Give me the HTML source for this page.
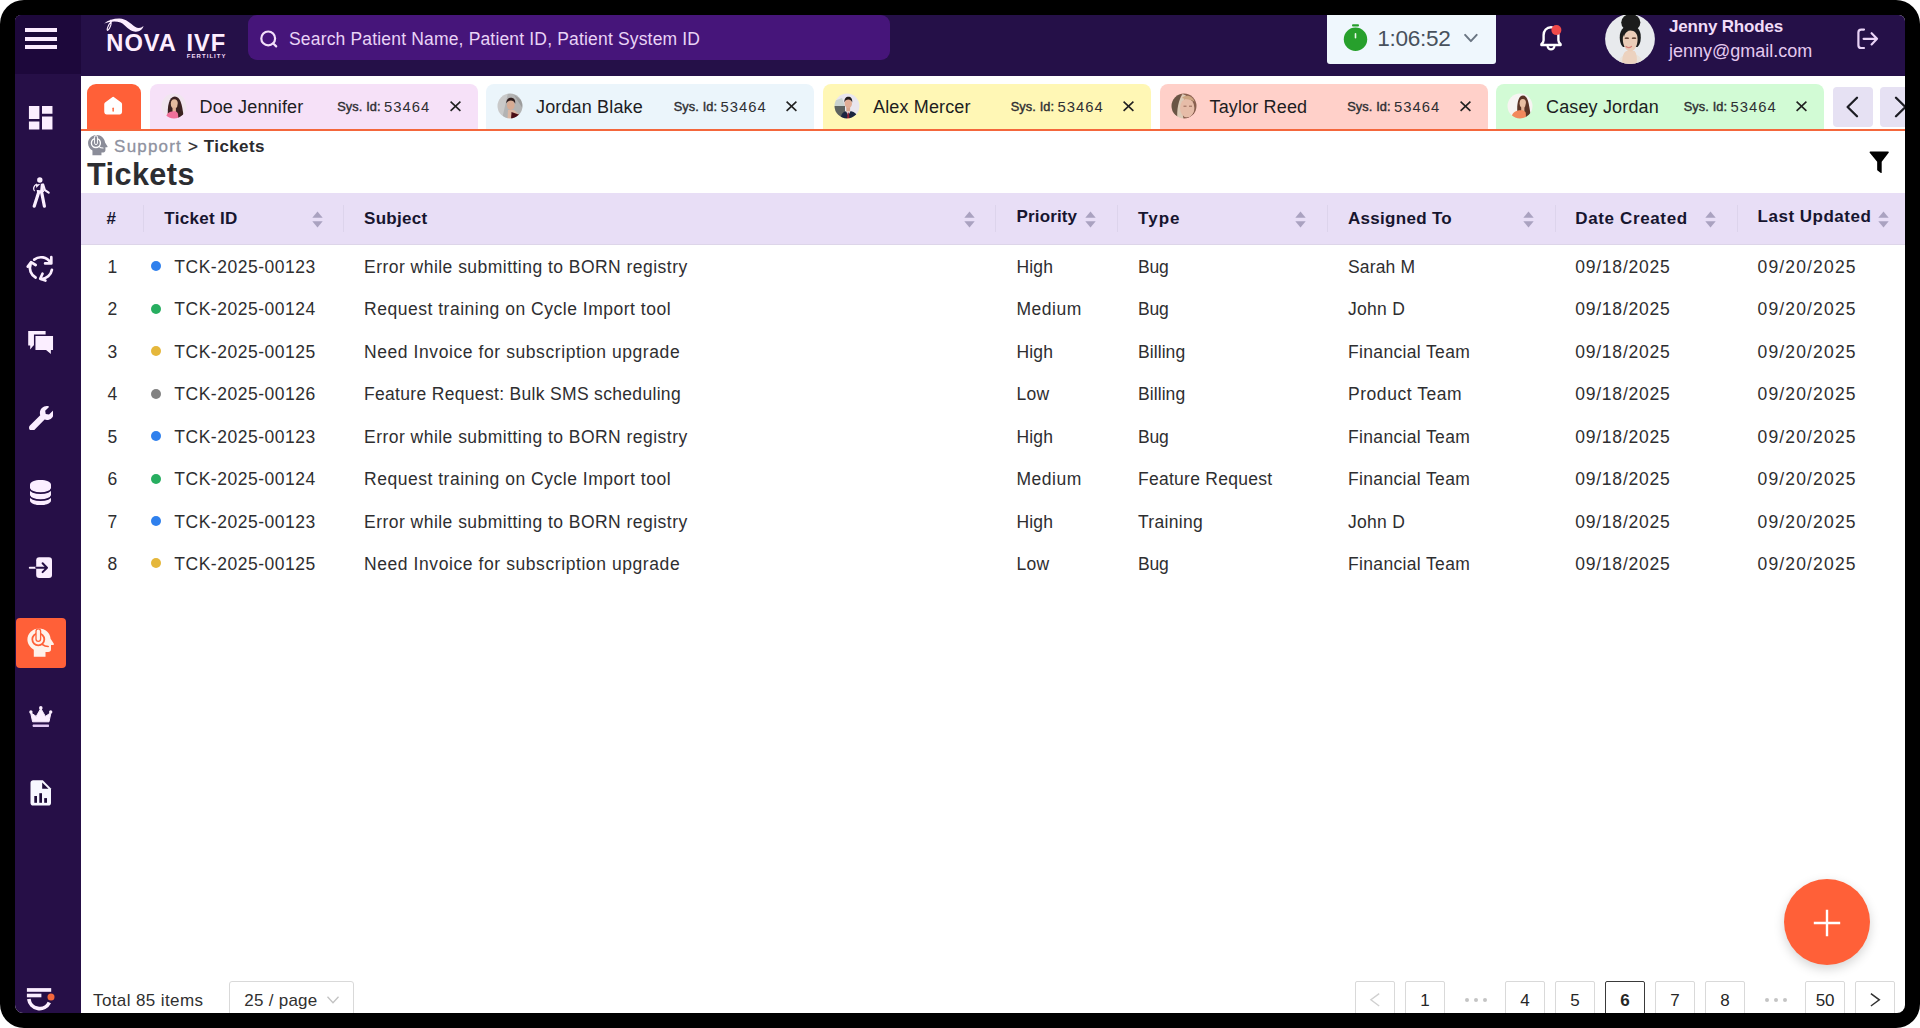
<!DOCTYPE html>
<html lang="en">
<head>
<meta charset="utf-8">
<title>Tickets</title>
<style>
*{box-sizing:border-box;margin:0;padding:0}
html,body{width:1920px;height:1028px;overflow:hidden;background:#fff}
body{font-family:"Liberation Sans",sans-serif;color:#2d2d2d;position:relative}
.frame{position:absolute;left:0;top:0;width:1920px;height:1028px;background:#000;border-radius:24px}
.screen{position:absolute;left:15px;top:15px;width:1890px;height:998px;background:#fff;border-radius:6px 6px 8px 8px;overflow:hidden}
.page{position:absolute;left:-15px;top:-15px;width:1920px;height:1028px}
.page div,.page span,.page svg,.page h1,.page i,.page b.p{position:absolute;white-space:nowrap}
.topbar{left:15px;top:15px;width:1890px;height:61px;background:#251048}
.burger{left:15px;top:15px;width:66px;height:59px;background:#1d083b}
.burger i{left:10px;width:32px;height:4px;background:#fbeaff}
.sidebar{left:15px;top:74px;width:66px;height:940px;background:#260f47}
.active{left:16px;top:618px;width:50px;height:50px;background:#ff6038;border-radius:4px}
.search{left:248px;top:15px;width:642px;height:45.4px;background:#46157a;border-radius:9px}
.stext{left:289px;top:27.6px;font-size:17.5px;line-height:22px;color:#e9d3f6;letter-spacing:.17px}
.timer{left:1327px;top:15px;width:169px;height:49px;background:#eff7fd;border-radius:0 0 3px 3px}
.ttext{left:1377.2px;top:25.9px;font-size:22.6px;line-height:26px;color:#48515c;letter-spacing:-.3px}
.uname{left:1669px;top:15.9px;font-size:17px;line-height:22px;font-weight:bold;color:#f1dcf8;letter-spacing:-.18px}
.umail{left:1669px;top:39.7px;font-size:18px;line-height:22px;color:#e4c9ef}
.logo1{left:106.3px;top:30.45px;font-size:23.7px;line-height:26px;font-weight:bold;color:#fdeeff;letter-spacing:1px}
.logo2{left:186.5px;top:30.45px;font-size:23.7px;line-height:26px;font-weight:bold;color:#fdeeff;letter-spacing:.9px}
.logo3{left:186.8px;top:52.4px;font-size:6px;line-height:8px;font-weight:bold;color:#f3dcf7;letter-spacing:1.05px}
/* tabs */
.tabline{left:81px;top:128.7px;width:1824px;height:2.6px;background:#f4673c}
.tab{top:84px;height:45px;width:328px;border-radius:8px 8px 0 0}
.tab .nm{left:50px;top:11.6px;font-size:18px;line-height:22px;color:#1d1d1f;letter-spacing:.15px}
.tab .sid{left:187.7px;top:14px;font-size:12.8px;line-height:18px;font-weight:normal;-webkit-text-stroke:.4px #2f2f33;color:#2f2f33;letter-spacing:.1px}
.tab .num{left:234.6px;top:12.8px;font-size:14.8px;line-height:20px;color:#2f2f33;letter-spacing:1px}
.tab svg.x{left:300.4px;top:17.3px}
.tab svg.av{left:11.3px;top:9.3px}
.home{left:86.5px;top:84px;width:54.5px;height:46px;background:#ff6038;border-radius:9px 9px 0 0}
.arr{top:86.5px;width:40px;height:40px;background:#e6e1f3;border-radius:4px}
/* heading */
.crumb{left:114.1px;top:136.6px;font-size:17px;line-height:20px;color:#8f92a0;letter-spacing:1.2px;-webkit-text-stroke:.3px #8f92a0}
.crumb b{color:#2b2b2e;letter-spacing:.38px;-webkit-text-stroke:0}
.crumb i{position:static!important;font-style:normal;color:#2b2b2e;letter-spacing:0;-webkit-text-stroke:.3px #2b2b2e}
h1{left:87px;top:157.3px;font-size:30.6px;line-height:34px;font-weight:bold;color:#2c2d31;letter-spacing:.42px}
/* table */
.thead{left:81px;top:192.5px;width:1824px;height:52.5px;background:#e8def6;border-bottom:1px solid #ddd5e9}
.th{top:208.6px;font-size:17px;line-height:20px;font-weight:bold;color:#17152f}
.sep{top:205px;width:1px;height:27px;background:#ddd4ec}
.row{left:0;width:1920px;height:42px;font-size:17.5px;line-height:20px;color:#2e2e30}
.row span{top:11.8px}
.row i{left:151.2px;top:16.2px;width:10px;height:10px;border-radius:50%}
.c0{left:107.5px}.c1{left:174.3px;letter-spacing:.76px}.c2{left:364px}.c3{left:1016.5px}.c4{left:1138px}.c5{left:1348px}.c6{left:1575.2px;letter-spacing:.95px}.c7{left:1757.5px;letter-spacing:1.25px}
/* footer */
.total{left:93px;top:991px;font-size:17px;line-height:20px;color:#303030;letter-spacing:.39px}
.psel{left:229.3px;top:980.8px;width:125px;height:40px;border:1px solid #d9d9d9;border-radius:3px;background:#fff}
.psel span{left:14px;top:9.5px;font-size:17px;line-height:20px;color:#303030;letter-spacing:.26px}
.pg{top:980.8px;width:39.6px;height:40px;border:1px solid #d9d9d9;border-radius:2px;background:#fff;font-size:17px;color:#262626;text-align:center;line-height:38px}
.pg.on{border-color:#3a3a3a;font-weight:bold}
.dot{top:998.4px;width:4px;height:4px;border-radius:50%;background:#c4c4c4}
.fab{left:1784px;top:879px;width:86px;height:86px;border-radius:50%;background:#ff6038;box-shadow:0 4px 11px rgba(0,0,0,.17)}

</style>
</head>
<body>
<div class="frame"></div>
<div class="screen"><div class="page">
<div class="topbar"></div>
<div class="sidebar"></div>
<div class="burger"><i style="top:13px"></i><i style="top:21.5px"></i><i style="top:30px"></i></div>

<!-- logo -->
<svg style="left:102px;top:16px" width="46" height="20" viewBox="0 0 46 20"><path d="M2.200 7.400C6 4 12 2.300 17.500 2.400 24.200 2.600 28.200 7.300 33 10.700c3 2 6 1.600 8.500-.700-.800 3.500-3.900 5.900-8 5.700C26.800 15.400 24 9 18.500 6.500 14 4.700 8 5.200 2.200 7.400z" fill="#fdeeff"/><path d="M8.600 4.300C10.400 7 7.600 13.500 5.700 14.400 4.400 14.600 5.600 9.200 9.600 5.200" fill="none" stroke="#fdeeff" stroke-width="1.100" stroke-linecap="round"/></svg>
<span class="logo1">NOVA</span><span class="logo2">IVF</span><span class="logo3">FERTILITY</span>

<!-- search -->
<div class="search"></div>
<svg style="left:258px;top:27px" width="24" height="24" viewBox="0 0 24 24" fill="none" stroke="#f3dffa" stroke-width="2.200" stroke-linecap="round"><circle cx="10.200" cy="11.400" r="6.900"/><path d="M15.300 16.500l2.900 2.900"/></svg>
<span class="stext">Search Patient Name, Patient ID, Patient System ID</span>

<!-- timer -->
<div class="timer"></div>
<svg style="left:1342px;top:22px" width="28" height="30" viewBox="0 0 28 30"><rect x="10" y="2.2" width="7" height="2.2" rx="1" fill="#27a02c"/><circle cx="13.5" cy="17.2" r="11.7" fill="#27a02c"/><rect x="12.7" y="11" width="1.6" height="5.6" rx=".8" fill="#e9f7ea"/></svg>
<span class="ttext">1:06:52</span>
<svg style="left:1462px;top:32px" width="18" height="12" viewBox="0 0 18 12" fill="none" stroke="#6b7683" stroke-width="2" stroke-linecap="round" stroke-linejoin="round"><path d="M3.100 2.900l5.800 6.200 5.800-6.200"/></svg>

<!-- bell -->
<svg style="left:1536px;top:22px" width="30" height="32" viewBox="0 0 30 32"><path d="M15 5.2c-4.4 0-7.4 3.4-7.4 7.8v5.2c0 1.6-.8 2.8-2.2 4v.8h19.2v-.8c-1.400-1.200-2.200-2.400-2.200-4V13c0-4.400-3-7.800-7.400-7.800z" fill="none" stroke="#fff" stroke-width="2.4" stroke-linejoin="round"/><path d="M11.6 24.6c.4 1.700 1.700 2.800 3.400 2.800s3-1.100 3.400-2.800" fill="none" stroke="#fff" stroke-width="2.2" stroke-linecap="round"/><circle cx="20.400" cy="8.100" r="5" fill="#f04a4a"/></svg>

<!-- user -->
<svg style="left:1605.200px;top:13.600px" width="50" height="50" viewBox="0 0 50 50"><defs><clipPath id="uc"><circle cx="25" cy="25" r="24.900"/></clipPath></defs><g clip-path="url(#uc)"><rect width="50" height="50" fill="#e8eaed"/><g filter="url(#bl)"><path d="M13 50c1-5 3-8 6-9h13c3 1 5 4 6 9z" fill="#e9e3dc"/><path d="M17.500 50c-1-6 1-12 4-13h8c2 2 3 7 2 13z" fill="#ecd2bf"/><ellipse cx="25.800" cy="8.500" rx="9.600" ry="8.500" fill="#1c1f1d"/><path d="M15 27C13.500 17 18 11.500 25.500 11.500S37 17 35.500 27c-.500 3-2 5-3 6H18c-1.500-1.500-2.500-3.500-3-6z" fill="#1c1f1d"/><path d="M17.800 25c0-5.500 3-8.500 7.500-8.500s7.300 3 7.300 8.500c0 6.500-3 12.500-7.300 12.500S17.800 31.500 17.800 25z" fill="#ebcdb8"/><ellipse cx="21.800" cy="24.200" rx="2.300" ry=".900" fill="#6b4a3a"/><ellipse cx="29" cy="24.200" rx="2.300" ry=".900" fill="#6b4a3a"/><path d="M21 32.500c1.500 1.200 4 1.200 5.500 0" fill="none" stroke="#d9837a" stroke-width="1.300" stroke-linecap="round"/><path d="M19 23c.500-3 2.500-6 6.500-6.500-3 .500-5 0-7-1.500-1 2.500-1 5 .500 8z" fill="#1c1f1d"/></g></g></svg>
<span class="uname">Jenny Rhodes</span>
<span class="umail">jenny@gmail.com</span>
<svg style="left:1855px;top:26px" width="26" height="26" viewBox="0 0 26 26" fill="none" stroke="#e9d3f6" stroke-width="2.200" stroke-linecap="round" stroke-linejoin="round"><path d="M9 3.600H6.200c-1.700 0-2.800 1.100-2.800 2.800v12.800c0 1.700 1.100 2.800 2.800 2.800H9"/><path d="M8.600 12.800h13.200M16.600 7.200l5.400 5.600-5.400 5.600"/></svg>
<!-- tabs -->
<svg style="left:0;top:0" width="0" height="0"><defs><filter id="bl" x="-10%" y="-10%" width="120%" height="120%"><feGaussianBlur stdDeviation=".550"/></filter></defs></svg>
<div class="home"><svg style="left:14.800px;top:10.300px" width="24.300" height="25.800" viewBox="0 0 24 24" preserveAspectRatio="none"><path d="M11.400 2.700a1 1 0 0 1 1.200 0l7.400 5.200c.500.400.800.900.800 1.600v7.100c0 1.500-1 2.500-2.500 2.500H5.700c-1.500 0-2.500-1-2.500-2.500V9.500c0-.700.300-1.200.800-1.600z" fill="#fff"/><rect x="11.300" y="12.600" width="1.400" height="3.900" rx=".7" fill="#ff6038"/></svg></div>
<div class="tab" style="left:149.5px;background:#f6e1f8"><svg class="av" width="26" height="26" viewBox="0 0 26 26"><defs><clipPath id="ca1"><circle cx="13" cy="13" r="12.500"/></clipPath></defs><g clip-path="url(#ca1)"><g filter="url(#bl)"><rect width="26" height="26" fill="#f1e6ef"/><path d="M7 24C6 14 8 3.500 13.800 3.500S21 12 22.500 22.500L18 26H8z" fill="#3b2320"/><ellipse cx="13.300" cy="10.800" rx="3.500" ry="4.500" fill="#e6bb9e"/><path d="M11.500 14h3.400v5h-3.400z" fill="#e2b296"/><path d="M4.500 26c.500-5 3-7.800 8.500-7.800 3 0 4.500 1.300 5 7.800z" fill="#f0709a"/><path d="M16.400 10c1.200 5 1.800 10 5.600 13.500L17.500 26z" fill="#3b2320"/></g></g></svg><span class="nm">Doe Jennifer</span><span class="sid">Sys. Id:</span><span class="num">53464</span><svg class="x" width="11" height="11" viewBox="0 0 11 11" fill="none" stroke="#222" stroke-width="1.600"><path d="M.600.600L10.400 9.900M10.400.600L.600 9.900"/></svg></div>
<div class="tab" style="left:486px;background:#ebf5fb"><svg class="av" width="26" height="26" viewBox="0 0 26 26"><defs><clipPath id="ca2"><circle cx="13" cy="13" r="12.500"/></clipPath></defs><g clip-path="url(#ca2)"><g filter="url(#bl)"><rect width="26" height="26" fill="#b3b3b3"/><path d="M0 0h11L5 26H0z" fill="#c9c9c9"/><path d="M17 2l9 6v8z" fill="#9c9c9c"/><path d="M10.500 26l.500-9h6l6 5.500-3 3.500z" fill="#dcb7a3"/><path d="M14.500 19l8.500 3-3 4h-6z" fill="#4a1019"/><ellipse cx="13.800" cy="12" rx="3.900" ry="5" fill="#d6ab94"/><path d="M9.300 10.500c0-3.800 2-5.700 4.700-5.700s4.700 2 4.200 6c-1-2.300-2.400-3.300-4.300-3.300s-3.500.700-4.600 3z" fill="#2d1a1a"/></g></g></svg><span class="nm">Jordan Blake</span><span class="sid">Sys. Id:</span><span class="num">53464</span><svg class="x" width="11" height="11" viewBox="0 0 11 11" fill="none" stroke="#222" stroke-width="1.600"><path d="M.600.600L10.400 9.900M10.400.600L.600 9.900"/></svg></div>
<div class="tab" style="left:823px;background:#fff7b5"><svg class="av" width="26" height="26" viewBox="0 0 26 26"><defs><clipPath id="ca3"><circle cx="13" cy="13" r="12.500"/></clipPath></defs><g clip-path="url(#ca3)"><g filter="url(#bl)"><rect width="26" height="26" fill="#e9e6ee"/><path d="M0 13h11v13H0z" fill="#5d625e"/><path d="M0 8l8-3 3 8H0z" fill="#c9d2cf"/><path d="M6.500 26c.500-5.500 3-8 8-8s9 2.500 9.500 8z" fill="#1b2740"/><path d="M12 18l2.200 4.500 2.400-4.500z" fill="#f1f1f4"/><path d="M13.600 19.500h1.200l.700 6.500h-2.600z" fill="#8e2436"/><rect x="12.300" y="14" width="3.800" height="4.500" fill="#d8a58c"/><ellipse cx="14.300" cy="10.500" rx="3.700" ry="4.700" fill="#e2ae96"/><path d="M10.400 9.500c-.300-4 1.600-5.800 4-5.800s4.300 2 3.800 5.800c-.800-2.300-2-3-3.900-3s-3.100.700-3.900 3z" fill="#231b1b"/></g></g></svg><span class="nm">Alex Mercer</span><span class="sid">Sys. Id:</span><span class="num">53464</span><svg class="x" width="11" height="11" viewBox="0 0 11 11" fill="none" stroke="#222" stroke-width="1.600"><path d="M.600.600L10.400 9.900M10.400.600L.600 9.900"/></svg></div>
<div class="tab" style="left:1159.5px;background:#ffd0c9"><svg class="av" width="26" height="26" viewBox="0 0 26 26"><defs><clipPath id="ca4"><circle cx="13" cy="13" r="12.500"/></clipPath></defs><g clip-path="url(#ca4)"><g filter="url(#bl)"><rect width="26" height="26" fill="#8a6150"/><path d="M0 0h10L6 26H0z" fill="#6a5444"/><path d="M11.500 1C7.500 7 5.500 17 6.500 26h6C11 18 11.500 9 15 2.500z" fill="#dccbb8"/><ellipse cx="16.200" cy="15" rx="7.200" ry="9.600" fill="#e6bca8"/><path d="M11 5c3-3.500 10-3 12.500 3.500-3.500-2-8-2-12.500-3.500z" fill="#cda582"/><path d="M13 24.500c3.500 1.500 8-1 10-5l2 3-5 3.500z" fill="#5b2c26"/><path d="M12.500 13.200h3M18 13.200h3" stroke="#8b5e4e" stroke-width=".900"/></g></g></svg><span class="nm">Taylor Reed</span><span class="sid">Sys. Id:</span><span class="num">53464</span><svg class="x" width="11" height="11" viewBox="0 0 11 11" fill="none" stroke="#222" stroke-width="1.600"><path d="M.600.600L10.400 9.900M10.400.600L.600 9.900"/></svg></div>
<div class="tab" style="left:1496px;background:#d2fbd5"><svg class="av" width="26" height="26" viewBox="0 0 26 26"><defs><clipPath id="ca5"><circle cx="13" cy="13" r="12.500"/></clipPath></defs><g clip-path="url(#ca5)"><g filter="url(#bl)"><rect width="26" height="26" fill="#f7f4f2"/><path d="M10.500 22C9.500 12 11 2.500 16 2.500S22 11 23.500 21L20 25h-8z" fill="#5b3526"/><ellipse cx="15.800" cy="10.300" rx="3.200" ry="4.400" fill="#e8bfa2"/><path d="M14.200 13.500h3.200v4.500h-3.200z" fill="#e3b497"/><path d="M4.500 24c.800-4.500 4-6.800 9.500-6.800 4 0 6 2 6.500 8.800H6z" fill="#f2895b"/><path d="M18.400 9.500c1 4.500 1.500 9 4.500 12.500L19 25z" fill="#5b3526"/></g></g></svg><span class="nm">Casey Jordan</span><span class="sid">Sys. Id:</span><span class="num">53464</span><svg class="x" width="11" height="11" viewBox="0 0 11 11" fill="none" stroke="#222" stroke-width="1.600"><path d="M.600.600L10.400 9.900M10.400.600L.600 9.900"/></svg></div>
<div class="arr" style="left:1833px"><svg style="left:12px;top:9px" width="16" height="22" viewBox="0 0 16 22" fill="none" stroke="#1d1d24" stroke-width="2.300" stroke-linecap="round" stroke-linejoin="round"><path d="M12 1.800L2.600 11 12 20.200"/></svg></div>
<div class="arr" style="left:1880px"><svg style="left:12px;top:9px" width="16" height="22" viewBox="0 0 16 22" fill="none" stroke="#1d1d24" stroke-width="2.300" stroke-linecap="round" stroke-linejoin="round"><path d="M4 1.800L13.400 11 4 20.200"/></svg></div>
<div class="tabline"></div>
<!-- heading -->
<svg style="left:86.700px;top:133.700px" width="22" height="22.200" viewBox="0 0 21 21"><path d="M9 .800c4.600 0 8 3.300 8.200 7.300l2.300 3.400c.300.500 0 1-.500 1h-1.400v3c0 1.200-.800 2-2 2h-1.800v2.700H5.200v-4.500C2.700 14.200 1 11.700 1 8.700 1 4.300 4.500.800 9 .800z" fill="#8b8d99"/><circle cx="8.500" cy="8.500" r="4.300" fill="none" stroke="#fff" stroke-width="1.300"/><rect x="7.200" y="1.500" width="2.800" height="8.500" rx="1.400" fill="#8b8d99" stroke="#fff" stroke-width=".900"/><path d="M11.500 12c1 .900 2.300 1.300 3.800 1.300" fill="none" stroke="#fff" stroke-width="1.100" stroke-linecap="round"/></svg>
<span class="crumb">Support <i>&gt;</i> <b>Tickets</b></span>
<h1>Tickets</h1>
<svg style="left:1868.700px;top:151.200px" width="20.400" height="23.200" viewBox="0 0 22 24" preserveAspectRatio="none"><path d="M1.400.600h19.200c.700 0 1 .700.600 1.200L13.700 11v11.200c0 .500-.500.800-.900.500l-3.600-2.500c-.300-.200-.400-.400-.400-.700V11L.800 1.800C.400 1.300.700.600 1.400.600z" fill="#000"/></svg>
<!-- table head -->
<div class="thead"></div>
<span class="th" style="left:106.5px;top:208.6px;letter-spacing:0px">#</span>
<span class="th" style="left:164.3px;top:208.6px;letter-spacing:0.3px">Ticket ID</span>
<span class="th" style="left:364px;top:208.6px;letter-spacing:0.3px">Subject</span>
<span class="th" style="left:1016.5px;top:207.4px;letter-spacing:0.15px">Priority</span>
<span class="th" style="left:1138px;top:208.6px;letter-spacing:1.05px">Type</span>
<span class="th" style="left:1348px;top:208.6px;letter-spacing:0.3px">Assigned To</span>
<span class="th" style="left:1575.3px;top:208.6px;letter-spacing:0.63px">Date Created</span>
<span class="th" style="left:1757.6px;top:207.4px;letter-spacing:0.5px">Last Updated</span>
<div class="sep" style="left:142.5px"></div>
<div class="sep" style="left:342.5px"></div>
<div class="sep" style="left:995px"></div>
<div class="sep" style="left:1116.5px"></div>
<div class="sep" style="left:1326.5px"></div>
<div class="sep" style="left:1554.5px"></div>
<div class="sep" style="left:1736.5px"></div>
<svg style="left:311.5px;top:211px" width="11" height="17" viewBox="0 0 11 17"><path d="M5.500.400L10.700 6.800H.300z" fill="#aaa2c0"/><path d="M5.500 16.600L.300 10.200h10.400z" fill="#aaa2c0"/></svg>
<svg style="left:964px;top:211px" width="11" height="17" viewBox="0 0 11 17"><path d="M5.500.400L10.700 6.800H.300z" fill="#aaa2c0"/><path d="M5.500 16.600L.300 10.200h10.400z" fill="#aaa2c0"/></svg>
<svg style="left:1084.8px;top:211px" width="11" height="17" viewBox="0 0 11 17"><path d="M5.500.400L10.700 6.800H.300z" fill="#aaa2c0"/><path d="M5.500 16.600L.300 10.200h10.400z" fill="#aaa2c0"/></svg>
<svg style="left:1295px;top:211px" width="11" height="17" viewBox="0 0 11 17"><path d="M5.500.400L10.700 6.800H.300z" fill="#aaa2c0"/><path d="M5.500 16.600L.300 10.200h10.400z" fill="#aaa2c0"/></svg>
<svg style="left:1522.8px;top:211px" width="11" height="17" viewBox="0 0 11 17"><path d="M5.500.400L10.700 6.800H.300z" fill="#aaa2c0"/><path d="M5.500 16.600L.300 10.200h10.400z" fill="#aaa2c0"/></svg>
<svg style="left:1705px;top:211px" width="11" height="17" viewBox="0 0 11 17"><path d="M5.500.400L10.700 6.800H.300z" fill="#aaa2c0"/><path d="M5.500 16.600L.300 10.200h10.400z" fill="#aaa2c0"/></svg>
<svg style="left:1877.5px;top:211px" width="11" height="17" viewBox="0 0 11 17"><path d="M5.500.400L10.700 6.800H.300z" fill="#aaa2c0"/><path d="M5.500 16.600L.300 10.200h10.400z" fill="#aaa2c0"/></svg><div class="row" style="top:245.0px"><span class="c0">1</span><i style="background:#2f80ed"></i><span class="c1" style="letter-spacing:0.52px">TCK-2025-00123</span><span class="c2" style="letter-spacing:0.47px">Error while submitting to BORN registry</span><span class="c3" style="letter-spacing:0.17px">High</span><span class="c4" style="letter-spacing:-0.17px">Bug</span><span class="c5" style="letter-spacing:0.14px">Sarah M</span><span class="c6" style="letter-spacing:0.78px">09/18/2025</span><span class="c7" style="letter-spacing:1.16px">09/20/2025</span></div>
<div class="row" style="top:287.47px"><span class="c0">2</span><i style="background:#27ae60"></i><span class="c1" style="letter-spacing:0.52px">TCK-2025-00124</span><span class="c2" style="letter-spacing:0.52px">Request training on Cycle Import tool</span><span class="c3" style="letter-spacing:0.51px">Medium</span><span class="c4" style="letter-spacing:-0.17px">Bug</span><span class="c5" style="letter-spacing:0.27px">John D</span><span class="c6" style="letter-spacing:0.78px">09/18/2025</span><span class="c7" style="letter-spacing:1.16px">09/20/2025</span></div>
<div class="row" style="top:329.94px"><span class="c0">3</span><i style="background:#e5b73b"></i><span class="c1" style="letter-spacing:0.52px">TCK-2025-00125</span><span class="c2" style="letter-spacing:0.58px">Need Invoice for subscription upgrade</span><span class="c3" style="letter-spacing:0.17px">High</span><span class="c4" style="letter-spacing:0.08px">Billing</span><span class="c5" style="letter-spacing:0.34px">Financial Team</span><span class="c6" style="letter-spacing:0.78px">09/18/2025</span><span class="c7" style="letter-spacing:1.16px">09/20/2025</span></div>
<div class="row" style="top:372.41px"><span class="c0">4</span><i style="background:#828282"></i><span class="c1" style="letter-spacing:0.52px">TCK-2025-00126</span><span class="c2" style="letter-spacing:0.32px">Feature Request: Bulk SMS scheduling</span><span class="c3" style="letter-spacing:0.25px">Low</span><span class="c4" style="letter-spacing:0.08px">Billing</span><span class="c5" style="letter-spacing:0.54px">Product Team</span><span class="c6" style="letter-spacing:0.78px">09/18/2025</span><span class="c7" style="letter-spacing:1.16px">09/20/2025</span></div>
<div class="row" style="top:414.88px"><span class="c0">5</span><i style="background:#2f80ed"></i><span class="c1" style="letter-spacing:0.52px">TCK-2025-00123</span><span class="c2" style="letter-spacing:0.47px">Error while submitting to BORN registry</span><span class="c3" style="letter-spacing:0.17px">High</span><span class="c4" style="letter-spacing:-0.17px">Bug</span><span class="c5" style="letter-spacing:0.34px">Financial Team</span><span class="c6" style="letter-spacing:0.78px">09/18/2025</span><span class="c7" style="letter-spacing:1.16px">09/20/2025</span></div>
<div class="row" style="top:457.35px"><span class="c0">6</span><i style="background:#27ae60"></i><span class="c1" style="letter-spacing:0.52px">TCK-2025-00124</span><span class="c2" style="letter-spacing:0.52px">Request training on Cycle Import tool</span><span class="c3" style="letter-spacing:0.51px">Medium</span><span class="c4" style="letter-spacing:0.27px">Feature Request</span><span class="c5" style="letter-spacing:0.34px">Financial Team</span><span class="c6" style="letter-spacing:0.78px">09/18/2025</span><span class="c7" style="letter-spacing:1.16px">09/20/2025</span></div>
<div class="row" style="top:499.82px"><span class="c0">7</span><i style="background:#2f80ed"></i><span class="c1" style="letter-spacing:0.52px">TCK-2025-00123</span><span class="c2" style="letter-spacing:0.47px">Error while submitting to BORN registry</span><span class="c3" style="letter-spacing:0.17px">High</span><span class="c4" style="letter-spacing:0.32px">Training</span><span class="c5" style="letter-spacing:0.27px">John D</span><span class="c6" style="letter-spacing:0.78px">09/18/2025</span><span class="c7" style="letter-spacing:1.16px">09/20/2025</span></div>
<div class="row" style="top:542.29px"><span class="c0">8</span><i style="background:#e5b73b"></i><span class="c1" style="letter-spacing:0.52px">TCK-2025-00125</span><span class="c2" style="letter-spacing:0.58px">Need Invoice for subscription upgrade</span><span class="c3" style="letter-spacing:0.25px">Low</span><span class="c4" style="letter-spacing:-0.17px">Bug</span><span class="c5" style="letter-spacing:0.34px">Financial Team</span><span class="c6" style="letter-spacing:0.78px">09/18/2025</span><span class="c7" style="letter-spacing:1.16px">09/20/2025</span></div><!-- sidebar icons -->
<svg style="left:25px;top:102px" width="31.400" height="31.400" viewBox="0 0 24 24"><path d="M3 13h8V3H3v10zm0 8h8v-6H3v6zm10 0h8V11h-8v10zm0-18v6h8V3h-8z" fill="#fbeeff"/></svg>
<svg style="left:22px;top:170px" width="38" height="42" viewBox="0 0 38 42"><circle cx="17.800" cy="10" r="2.700" fill="#fbeeff"/><path d="M13.800 14.600L21.300 13.500 22 22H15z" fill="#fbeeff"/><path d="M18.900 13.200L12.600 19.700 18.200 20.300z" fill="#260f47"/><path d="M14.400 14.300C11.600 15.800 10.900 19.200 12.300 20.600" fill="none" stroke="#fbeeff" stroke-width="1.300" stroke-linecap="round"/><path d="M21.200 14.600L22.900 20.100 26.700 22.700" fill="none" stroke="#fbeeff" stroke-width="2.100" stroke-linecap="round" stroke-linejoin="round"/><path d="M16.700 22.300L12.200 36.200M19.700 22.600L22.400 36.200" fill="none" stroke="#fbeeff" stroke-width="3.200" stroke-linecap="round"/></svg>
<svg style="left:25.800px;top:253px" width="30" height="30" viewBox="0 0 30 30" fill="none" stroke="#fbeeff" stroke-width="2.700" stroke-linecap="round" stroke-linejoin="round"><path d="M8.200 6.600A11 11 0 0 1 24.400 9.600"/><path d="M25.300 4.200v6.200h-6.200" /><path d="M25.900 16.800A11 11 0 0 1 15.200 26"/><path d="M19.400 27.600l-5.200-1.900 2.300-5"/><path d="M9.600 24.500A11 11 0 0 1 4.600 11"/><path d="M1.800 13.600l3.200-4.400 4.600 2.800"/></svg>
<svg style="left:26px;top:329px" width="30" height="28" viewBox="0 0 30 28"><path d="M2.200 2.100h17.400v14.300H7.400L4.200 20.600v-4.200H2.200z" fill="#fbeeff"/><path d="M8.700 6.200h19.100v15.600h-2.200v4.800l-5.800-4.800H8.700z" fill="#fbeeff" stroke="#260f47" stroke-width="1.500"/></svg>
<svg style="left:28.500px;top:405.500px" width="24.800" height="24.800" viewBox="0 0 512 512"><path d="M507.730 109.100c-2.240-9.030-13.540-12.090-20.120-5.510l-74.360 74.360-67.880-11.310-11.310-67.880 74.360-74.360c6.620-6.620 3.430-17.900-5.660-20.160-47.380-11.740-99.550.91-136.580 37.930-39.640 39.640-50.550 97.100-34.050 147.200L18.740 402.760c-24.990 24.990-24.990 65.510 0 90.500 24.990 24.990 65.510 24.990 90.500 0l213.210-213.210c50.120 16.710 107.470 5.680 147.370-34.220 37.070-37.070 49.700-89.320 37.910-136.730z" fill="#fbeeff"/></svg>
<svg style="left:30.200px;top:480.100px" width="21" height="25.400" viewBox="0 0 21 25.400"><path d="M0 4.600C0 2 4.700 0 10.500 0S21 2 21 4.600v16c0 2.600-4.700 4.700-10.500 4.700S0 23.200 0 20.600z" fill="#fbeeff"/><path d="M-.500 8.600C0 11.300 4.700 13.200 10.500 13.200S21 11.300 21.500 8.600M-.500 15.600C0 18.300 4.700 20.200 10.500 20.200S21 18.300 21.500 15.600" fill="none" stroke="#260f47" stroke-width="1.700"/></svg>
<svg style="left:28px;top:555px" width="26" height="26" viewBox="0 0 26 26"><rect x="8.200" y="2.300" width="15.800" height="20.800" rx="3" fill="#fbeeff"/><path d="M1.800 12.700h6.400" stroke="#fbeeff" stroke-width="2" stroke-linecap="round"/><path d="M8.200 12.700h10.200M14.600 8.300l4.400 4.400-4.400 4.400" fill="none" stroke="#260f47" stroke-width="2" stroke-linecap="round" stroke-linejoin="round"/></svg>
<div class="active"></div>
<svg style="left:26px;top:627px" width="30" height="31" viewBox="0 0 30 31"><path d="M13 1.400c6.500 0 11.200 4.500 11.600 10.300l3.100 4.800c.500.800.100 1.500-.800 1.500h-1.900v4.300c0 1.700-1.100 2.800-2.800 2.800h-2.700v4.700H7.800v-7C4 20.600 1.400 16.700 1.400 12.600 1.400 6.300 6.500 1.400 13 1.400z" fill="#fff1ea"/><circle cx="12.300" cy="12.300" r="6" fill="none" stroke="#ff6038" stroke-width="1.800"/><rect x="10" y="1.800" width="4.600" height="12.600" rx="2.300" fill="#fff1ea" stroke="#ff6038" stroke-width="1.300"/><path d="M16.600 17.600c1.500 1.300 3.400 1.900 5.600 1.900" fill="none" stroke="#ff6038" stroke-width="1.600" stroke-linecap="round"/></svg>
<svg style="left:28px;top:704px" width="26" height="25" viewBox="0 0 26 25"><path d="M4.600 17.800L2.600 8.600l5.600 3.800L12.800 4.400l4.600 8 5.600-3.800-2 9.200z" fill="#fbeeff" stroke="#fbeeff" stroke-width="1" stroke-linejoin="round"/><circle cx="2.900" cy="7.900" r="1.700" fill="#fbeeff"/><circle cx="12.800" cy="3.900" r="1.800" fill="#fbeeff"/><circle cx="22.700" cy="7.900" r="1.700" fill="#fbeeff"/><rect x="4.700" y="20.600" width="16.300" height="2.300" rx=".6" fill="#e2c8f3"/></svg>
<svg style="left:29px;top:779px" width="24" height="28" viewBox="0 0 24 28"><path d="M4.200 1.200h9.600l8.200 8.200v14.500c0 1.600-1.100 2.700-2.700 2.700H4.200c-1.600 0-2.700-1.100-2.700-2.700V3.900c0-1.600 1.100-2.700 2.700-2.700z" fill="#f7f7ff"/><path d="M13.200 3.400l6.300 6.300h-6.300z" fill="#1d0c38"/><rect x="5.300" y="17" width="2.700" height="6.800" fill="#1d0c38"/><rect x="10.300" y="14.200" width="2.700" height="9.600" fill="#1d0c38"/><rect x="15.200" y="19.100" width="2.800" height="4.700" fill="#1d0c38"/></svg>
<svg style="left:25px;top:986px" width="32" height="28" viewBox="0 0 32 28"><rect x="1.900" y="2.100" width="24.300" height="3.700" fill="#fbeeff"/><rect x="1.900" y="7.700" width="14.500" height="3.600" fill="#fbeeff"/><path d="M3.830 13A10.850 10.850 0 0 0 24.350 16.460" fill="none" stroke="#fbeeff" stroke-width="3.700"/><circle cx="26" cy="11.100" r="3.500" fill="#f4673c"/></svg>
<!-- footer -->
<div class="fab"><svg style="left:29.300px;top:29.800px" width="28" height="28" viewBox="0 0 28 28" stroke="#fff" stroke-width="2.400" fill="none"><path d="M14 .800v26.400M.800 14h26.400"/></svg></div>
<span class="total">Total 85 items</span>
<div class="psel"><span>25 / page</span><svg style="left:96px;top:13.600px" width="14" height="10" viewBox="0 0 14 10" fill="none" stroke="#c2c2c2" stroke-width="1.300"><path d="M1.500 1.800L7 7.800l5.500-6"/></svg></div>
<div class="pg" style="left:1355.300px"><svg style="left:12px;top:11.400px" width="14" height="16" viewBox="0 0 14 16" fill="none" stroke="#d0d0d0" stroke-width="1.400"><path d="M11.200.600L2.900 6.800l8.300 6.200"/></svg></div>
<div class="pg" style="left:1405.300px">1</div>
<i class="dot" style="left:1464.900px"></i><i class="dot" style="left:1473.700px"></i><i class="dot" style="left:1482.600px"></i>
<div class="pg" style="left:1505.300px">4</div>
<div class="pg" style="left:1555.300px">5</div>
<div class="pg on" style="left:1605.300px">6</div>
<div class="pg" style="left:1655.300px">7</div>
<div class="pg" style="left:1705.300px">8</div>
<i class="dot" style="left:1764.900px"></i><i class="dot" style="left:1773.700px"></i><i class="dot" style="left:1782.600px"></i>
<div class="pg" style="left:1805.300px">50</div>
<div class="pg" style="left:1855.300px"><svg style="left:12px;top:11.400px" width="14" height="16" viewBox="0 0 14 16" fill="none" stroke="#333" stroke-width="1.500"><path d="M2.900.600l8.400 6.200-8.400 6.200"/></svg></div>
</div></div>

</body>
</html>
